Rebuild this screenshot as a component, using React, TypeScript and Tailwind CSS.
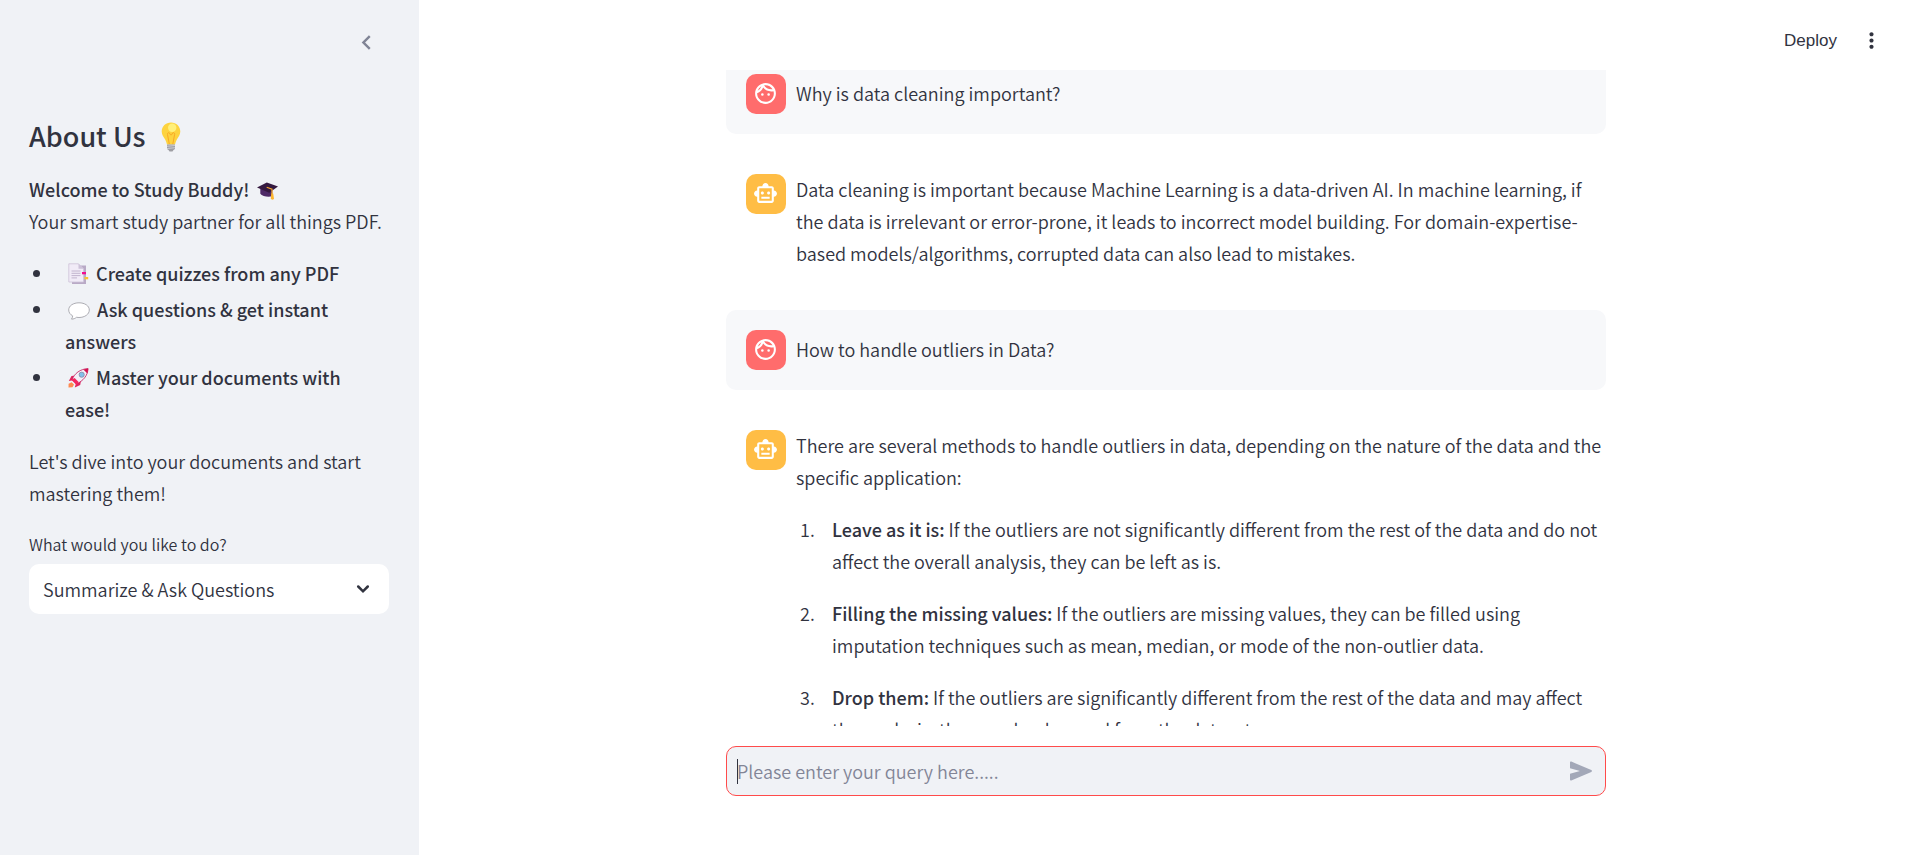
import { useState } from "react";
import type { ReactNode } from "react";
import { MdChevronLeft, MdMoreVert, MdOutlineFace, MdOutlineSmartToy } from "react-icons/md";

function BulbEmoji() {
  return (
    <svg viewBox="0 0 20 30" className="mx-[9px] inline-block h-[30px] w-5 align-[-5px]" aria-hidden="true">
      <path d="M10 .5C4.700.5.7 4.400.7 9.500c0 3.500 1.900 5.500 3.300 7.700 1.200 1.900 1.500 3.800 2 5.300h8c.5-1.500.8-3.400 2-5.300 1.400-2.200 3.300-4.200 3.300-7.700C19.300 4.400 15.300.5 10 .5Z" fill="#fdd33f" />
      <circle cx="11.200" cy="5.700" r="4.200" fill="#fff07a" />
      <path d="M8.300 22 6.500 12.500c-.4-2 2-2.600 2.400-.6.300 1.300 2 1.300 2.300 0 .4-2 2.800-1.400 2.400.6L11.800 22" fill="none" stroke="#f9a825" strokeWidth="1" />
      <path d="M6 22.500h8v4.500l-1.500 1-1 1.500h-3l-1-1.500L6 27Z" fill="#9e9ea3" />
      <path d="M6 24.300l8-.8M6 26.500l8-.8" stroke="#d9d9de" strokeWidth=".8" />
    </svg>
  );
}

function CapEmoji() {
  return (
    <svg viewBox="0 0 21 18" className="ml-1 inline-block h-[18px] w-[21px] align-[-3px]" aria-hidden="true">
      <path d="M3.300 6.500v5.200c1.800 2.600 8.700 4 12 2.300V7Z" fill="#4e2a67" />
      <path d="M0 5.500 9.800.4 21 4.600l-8.800 6.200Z" fill="#34193f" />
      <path d="m9.700 5.200 5.300 2v5" fill="none" stroke="#f9a72b" strokeWidth="1.200" />
      <path d="M14.200 11.500h2l.8 5.500-1.500.7-1.700-.6Z" fill="#fdb52e" />
    </svg>
  );
}

function PageEmoji() {
  return (
    <svg viewBox="0 0 21 22" className="mx-[3px] inline-block h-[22px] w-[21px] align-[-4px]" aria-hidden="true">
      <path d="M4 2.500h14V21H4Z" fill="#b9aac6" />
      <path d="M.8.800h9.700l5 5V19H.8Z" fill="#f1ebf7" stroke="#cdc1d8" strokeWidth=".8" />
      <path d="M10.500.8v5h5Z" fill="#cdc1d8" />
      <path d="M3.500 8h9M3.500 10.300h9M3.500 12.600h9M3.500 14.900h5.500" stroke="#c2b4ce" strokeWidth="1" />
      <path d="M14 9h4v2.300h-4Z" fill="#f20c90" />
      <path d="M16.500 14h3.700v2.300h-3.700Z" fill="#fcc22d" />
    </svg>
  );
}

function BubbleEmoji() {
  return (
    <svg viewBox="0 0 22 18" className="mx-[3px] inline-block h-[18px] w-[22px] align-[-3px]" aria-hidden="true">
      <path d="M11 .8C5.300.8.7 3.700.7 7.900c0 2.800 1.700 4.700 4 6-.1 1.200-.5 2.300-1.200 3.200 2 .1 3.700-.7 5-1.800.8.100 1.600.2 2.500.2 5.700 0 10.300-3.200 10.300-7.500S16.700.8 11 .8Z" fill="#fff" stroke="#a4a4aa" strokeWidth=".9" />
    </svg>
  );
}

function RocketEmoji() {
  return (
    <svg viewBox="0 0 21 20" className="mx-[3px] inline-block h-5 w-[21px] align-[-3px]" aria-hidden="true">
      <path d="M8 7.500 3.500 8 .8 13l4.700-.8M13 12.500l-.8 4.500-5.400 2.500 1.400-5" fill="#e0245e" />
      <path d="M.5 19.500.6 15.800l3-1.600 2.400 2.300-1.500 2.700Z" fill="#ff8a50" />
      <path d="M4.200 11.500C6.500 5.500 12 1 20 .6c-.2 7-5 12.400-11.500 15.400Z" fill="#f4eff8" stroke="#c2185b" strokeWidth=".8" />
      <path d="M15.300 1.600 20.300.5l-.9 5Z" fill="#d5124f" />
      <path d="m3.300 11.700 3.300-1.600 4 4-1.800 3.200Z" fill="#f5265f" />
      <circle cx="13.700" cy="6.700" r="2.600" fill="#82c0ea" stroke="#8a7f9a" strokeWidth=".7" />
    </svg>
  );
}

function Avatar({ role }: { role: "user" | "assistant" }) {
  const user = role === "user";
  const Icon = user ? MdOutlineFace : MdOutlineSmartToy;
  return (
    <div
      className={`flex size-10 shrink-0 items-center justify-center rounded-[10px] pr-px pb-px text-white ${user ? "bg-[#ff6c6c]" : "bg-[#ffbd45]"}`}
    >
      <Icon className="size-[25px]" />
    </div>
  );
}

function Message({ role, children }: { role: "user" | "assistant"; children: ReactNode }) {
  const user = role === "user";
  return (
    <article className={`flex items-start gap-2.5 rounded-[10px] py-5 pl-5 ${user ? "bg-[#f7f8fa]" : ""}`}>
      <Avatar role={role} />
      <div className={`flex min-w-0 flex-1 flex-col gap-5 ${user ? "mt-[3px]" : "-mt-px mb-px"}`}>
        {children}
      </div>
    </article>
  );
}

const features: { icon: ReactNode; label: string }[] = [
  { icon: <PageEmoji />, label: "Create quizzes from any PDF" },
  { icon: <BubbleEmoji />, label: "Ask questions & get instant answers" },
  { icon: <RocketEmoji />, label: "Master your documents with ease!" },
];

const methods = [
  {
    title: "Leave as it is:",
    text: "If the outliers are not significantly different from the rest of the data and do not affect the overall analysis, they can be left as is.",
  },
  {
    title: "Filling the missing values:",
    text: "If the outliers are missing values, they can be filled using imputation techniques such as mean, median, or mode of the non-outlier data.",
  },
  {
    title: "Drop them:",
    text: "If the outliers are significantly different from the rest of the data and may affect the analysis, they can be dropped from the dataset.",
  },
];

function Sidebar() {
  return (
    <aside className="flex w-[419px] shrink-0 flex-col bg-[#f0f2f6] pr-[30px] pl-[29px]">
      <div className="flex justify-end pt-7 pr-2">
        <button type="button" aria-label="Collapse sidebar" className="text-[#808495]">
          <MdChevronLeft className="size-[29px]" />
        </button>
      </div>
      <h2 className="mt-[61px] text-[27px] leading-9 font-medium">
        About Us <BulbEmoji />
      </h2>
      <p className="mt-[19px]">
        <strong className="font-medium">
          Welcome to Study Buddy! <CapEmoji />
        </strong>
        <br />
        Your smart study partner for all things PDF.
      </p>
      <ul className="mt-5 flex flex-col gap-1">
        {features.map((f) => (
          <li key={f.label} className="flex gap-[25px] pl-1">
            <span className="mt-[13px] size-[7px] shrink-0 rounded-full bg-[#31333f]" />
            <strong className="font-medium">
              {f.icon} {f.label}
            </strong>
          </li>
        ))}
      </ul>
      <p className="mt-5">Let's dive into your documents and start mastering them!</p>
      <label htmlFor="task" className="mt-5 text-base leading-[30px]">
        What would you like to do?
      </label>
      <div className="relative mt-[5px]">
        <select
          id="task"
          className="h-[50px] w-full appearance-none rounded-[10px] bg-white pr-12 pl-3.5 text-[#31333f] outline-none"
        >
          <option>Summarize &amp; Ask Questions</option>
        </select>
        <svg
          viewBox="0 0 14 10"
          className="pointer-events-none absolute top-5 right-[19px] h-2.5 w-3.5"
          fill="none"
          stroke="#31333f"
          strokeWidth="2.500"
          strokeLinecap="round"
          aria-hidden="true"
        >
          <path d="m2.200 2.500 4.800 4.800 4.800-4.800" />
        </svg>
      </div>
    </aside>
  );
}

export default function App() {
  const [query, setQuery] = useState("");
  return (
    <div className="flex h-screen bg-white font-['Noto_Sans_CJK_SC','Noto_Sans',sans-serif] text-[18px] leading-8 font-[350] text-[#31333f]">
      <Sidebar />
      <div className="flex min-w-0 flex-1 flex-col">
        <header className="flex h-[70px] shrink-0 items-center justify-end gap-[22px] pt-[11px] pr-[33px] font-['Liberation_Sans',sans-serif] text-[17px]">
          <button type="button">Deploy</button>
          <button type="button" aria-label="Main menu">
            <MdMoreVert className="size-[25px]" />
          </button>
        </header>
        <main className="min-h-0 flex-1 overflow-hidden pr-1">
          <div className="mx-auto -mt-4 flex max-w-[880px] flex-col gap-5">
            <Message role="user">
              <p>Why is data cleaning important?</p>
            </Message>
            <Message role="assistant">
              <p>
                Data cleaning is important because Machine Learning is a data-driven AI. In machine learning, if the
                data is irrelevant or error-prone, it leads to incorrect model building. For domain-expertise-based
                models/algorithms, corrupted data can also lead to mistakes.
              </p>
            </Message>
            <Message role="user">
              <p>How to handle outliers in Data?</p>
            </Message>
            <Message role="assistant">
              <p>
                There are several methods to handle outliers in data, depending on the nature of the data and the
                specific application:
              </p>
              <ol className="flex flex-col gap-5">
                {methods.map((m, i) => (
                  <li key={m.title} className="flex">
                    <span className="w-9 shrink-0 pl-1">{i + 1}.</span>
                    <p>
                      <strong className="font-medium">{m.title}</strong> {m.text}
                    </p>
                  </li>
                ))}
              </ol>
            </Message>
          </div>
        </main>
        <footer className="shrink-0 pt-5 pr-1 pb-[59px]">
          <form
            onSubmit={(e) => e.preventDefault()}
            className="relative mx-auto flex h-[50px] max-w-[880px] items-center rounded-[10px] border border-[#ff4b4b] bg-[#f0f2f6] pr-3 pl-2.5"
          >
            <span className="absolute h-[25px] w-px bg-[#31333f]" />
            <input
              type="text"
              aria-label="Query"
              value={query}
              onChange={(e) => setQuery(e.target.value)}
              placeholder="Please enter your query here....."
              className="h-full min-w-0 flex-1 bg-transparent outline-none placeholder:text-[#828596]"
            />
            <button type="submit" aria-label="Send" className="text-[#a3a8b8]">
              <svg viewBox="0 0 24 20" className="h-5 w-6" fill="currentColor" aria-hidden="true">
                <path d="M1 1.500v5.700l10 2.800-10 2.800v5.700c0 .7.700 1.100 1.300.9l20-8.500c.8-.4.8-1.500 0-1.800l-20-8.500C1.700.4 1 .8 1 1.500Z" />
              </svg>
            </button>
          </form>
        </footer>
      </div>
    </div>
  );
}
